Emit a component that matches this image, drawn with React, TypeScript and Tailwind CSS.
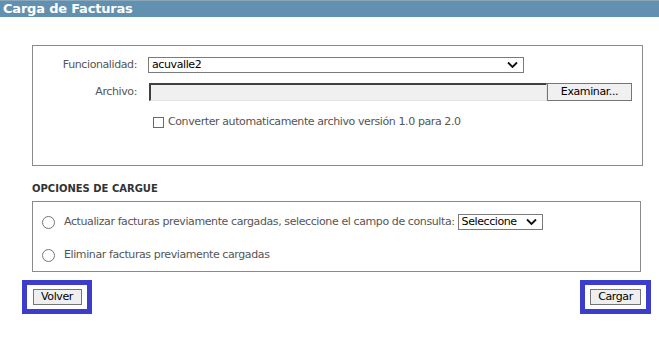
import React from 'react';

const Chevron = () => (
  <svg width="11" height="7" viewBox="0 0 11 7" className="pointer-events-none absolute right-[6px] top-1/2 -translate-y-1/2">
    <path d="M1 1l4.5 4.5L10 1" fill="none" stroke="#111" strokeWidth="1.8" />
  </svg>
);

const Radio = () => (
  <span className="inline-block w-[13px] h-[13px] rounded-full border border-[#767676] bg-white shrink-0" />
);

const App: React.FC = () => {
  return (
    <div className="min-h-[347px] bg-white text-[11px] text-[#555] tracking-[-0.4px] font-['DejaVu_Sans',Verdana,sans-serif]">
      {/* Title bar */}
      <div className="h-[17px] bg-[#6190b0] border-t border-[#8aa6bb] pl-[3px] text-[13px] leading-[15px] font-bold text-white tracking-[-0.2px]">
        Carga de Facturas
      </div>

      {/* Datos del archivo */}
      <div className="mt-[28px] ml-[32px] mr-[16px] h-[121px] border border-[#8a8a8a] pt-[11px]">
        <div className="flex items-center h-[16px]">
          <div className="w-[104px] text-right">Funcionalidad:</div>
          <div className="relative ml-[11px] w-[376px] h-[16px]">
            <select className="appearance-none w-full h-full border border-[#7a7a7a] bg-white pl-[3px] text-[11px] leading-[14px] text-black outline-none">
              <option>acuvalle2</option>
            </select>
            <Chevron />
          </div>
        </div>

        <div className="flex items-center h-[18px] mt-[10px]">
          <div className="w-[104px] text-right">Archivo:</div>
          <input
            readOnly
            className="ml-[12px] w-[398px] h-[18px] bg-[#f0f0f0] border-t-2 border-l-2 border-b border-r border-t-[#404040] border-l-[#404040] border-b-[#e3e3e3] border-r-[#e3e3e3] outline-none"
          />
          <button className="w-[85px] h-[18px] bg-[#f0f0f0] border border-[#767676] text-[11px] leading-[14px] text-black">
            Examinar...
          </button>
        </div>

        <label className="flex items-center mt-[13px] ml-[120px] gap-[4px]">
          <span className="inline-block w-[11px] h-[11px] border border-[#6a6a6a] bg-white" />
          Converter automaticamente archivo versión 1.0 para 2.0
        </label>
      </div>

      {/* Opciones de cargue */}
      <div className="ml-[32px] mt-[17px] h-[12px] leading-[12px] font-bold text-[10px] text-[#333] tracking-[0px]">
        OPCIONES DE CARGUE
      </div>
      <div className="mt-[6px] ml-[32px] mr-[18px] h-[71px] border border-[#8a8a8a] pl-[9px] pt-[12px]">
        <div className="flex items-center h-[16px]">
          <Radio />
          <span className="ml-[9px] mr-[3px]">Actualizar facturas previamente cargadas, seleccione el campo de consulta:</span>
          <div className="relative w-[85px] h-[16px]">
            <select className="appearance-none w-full h-full border border-[#7a7a7a] bg-white pl-[3px] text-[11px] leading-[14px] text-black outline-none">
              <option>Seleccione</option>
            </select>
            <Chevron />
          </div>
        </div>
        <div className="flex items-center h-[16px] mt-[17px]">
          <Radio />
          <span className="ml-[9px]">Eliminar facturas previamente cargadas</span>
        </div>
      </div>

      {/* Acciones */}
      <div className="flex justify-between mt-[8px] ml-[22px] mr-[8px]">
        <div className="w-[70px] h-[34px] border-[5px] border-[#3d3dcc] bg-white flex items-center justify-center">
          <button className="w-[49px] h-[16px] bg-[#efefef] border border-[#767676] text-[11px] leading-[14px] text-black">
            Volver
          </button>
        </div>
        <div className="w-[71px] h-[34px] border-[5px] border-[#3d3dcc] bg-white flex items-center justify-center">
          <button className="w-[51px] h-[16px] bg-[#efefef] border border-[#767676] text-[11px] leading-[14px] text-black">
            Cargar
          </button>
        </div>
      </div>
    </div>
  );
};

export default App;
